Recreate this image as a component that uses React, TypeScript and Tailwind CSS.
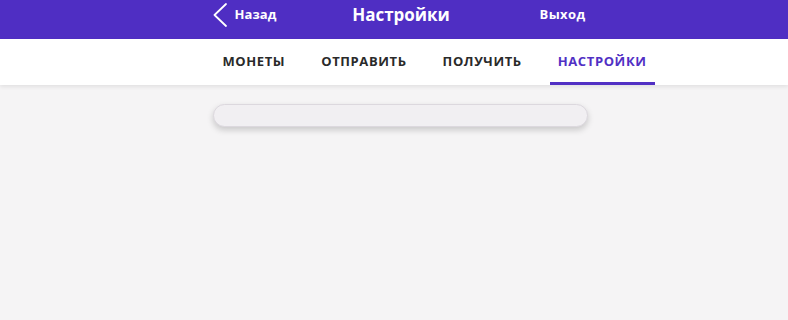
const tabs = [
  { label: "МОНЕТЫ", active: false },
  { label: "ОТПРАВИТЬ", active: false },
  { label: "ПОЛУЧИТЬ", active: false },
  { label: "НАСТРОЙКИ", active: true },
];

export default function App() {
  return (
    <div
      className="min-h-[320px] bg-[#f5f4f5]"
      style={{ fontFamily: '"Open Sans", "Noto Sans", sans-serif' }}
    >
      {/* Header */}
      <header className="h-[39px] bg-[#4f2ec3] text-white">
        <div className="mx-auto grid h-full w-[375px] translate-x-[7px] grid-cols-[1fr_auto_1fr] items-center pb-[10px]">
          <div className="flex items-center gap-[8px]">
            <svg width="14" height="24" viewBox="0 0 14 24" fill="none" className="-ml-[1px] mt-[1px]">
              <polyline
                points="13,1 1.5,12 13,23"
                stroke="white"
                strokeWidth="1.8"
                strokeLinecap="round"
                strokeLinejoin="round"
              />
            </svg>
            <span className="text-[13px] font-bold tracking-[0.1px]">Назад</span>
          </div>
          <h1 className="text-[17px] font-bold">Настройки</h1>
          <span className="justify-self-end pr-[3px] text-[13px] font-bold tracking-[0.4px]">Выход</span>
        </div>
      </header>

      {/* Tabs */}
      <nav className="relative h-[46px] bg-white shadow-[0_2px_4px_rgba(0,0,0,0.08)]">
        <div className="mx-auto flex h-full w-[375px] translate-x-[8px] items-stretch gap-[20px]">
          {tabs.map((t) => (
            <div
              key={t.label}
              className={`flex shrink-0 items-center border-b-[3px] px-[8px] pt-[3px] text-[13px] font-bold tracking-[0.6px] ${
                t.active
                  ? "border-[#5130c4] text-[#5130c4]"
                  : "border-transparent text-[#2a2a2a]"
              }`}
            >
              {t.label}
            </div>
          ))}
        </div>
      </nav>

      {/* Settings list (empty) */}
      <div className="mx-auto w-[375px] translate-x-[6px] pt-[19px]">
        <div className="h-[23px] rounded-[12px] border border-[#dcd8de] bg-[#f1eff2] shadow-[0_3px_6px_rgba(0,0,0,0.18)]" />
      </div>
    </div>
  );
}
